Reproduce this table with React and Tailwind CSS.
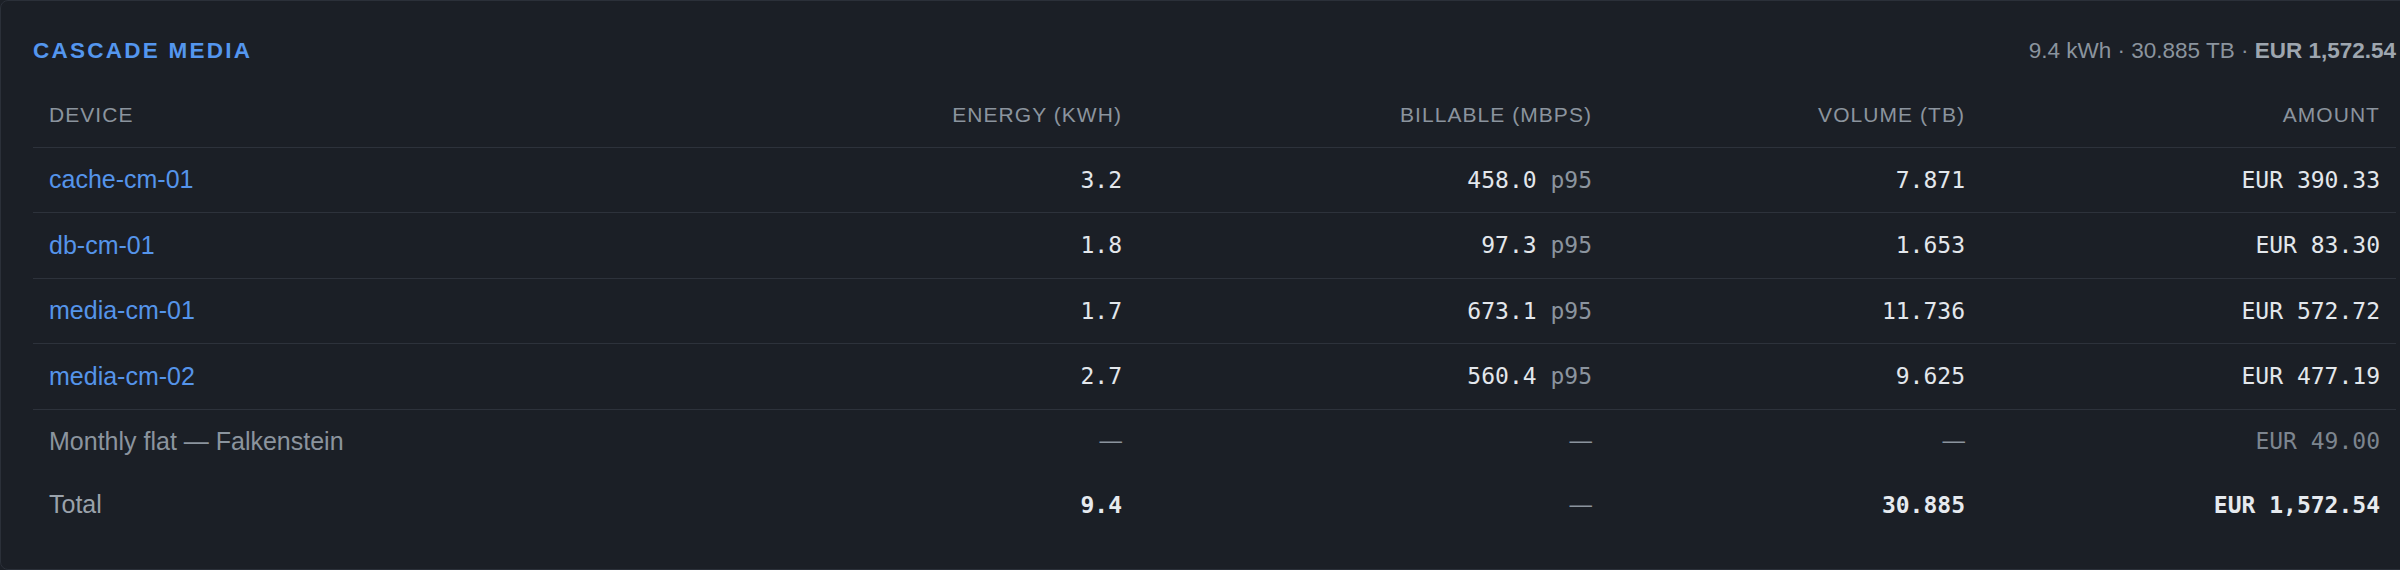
const rows = [
  { device: "cache-cm-01", energy: "3.2", mbps: "458.0", volume: "7.871", amount: "EUR 390.33" },
  { device: "db-cm-01", energy: "1.8", mbps: "97.3", volume: "1.653", amount: "EUR 83.30" },
  { device: "media-cm-01", energy: "1.7", mbps: "673.1", volume: "11.736", amount: "EUR 572.72" },
  { device: "media-cm-02", energy: "2.7", mbps: "560.4", volume: "9.625", amount: "EUR 477.19" },
];

const sans = "font-['Liberation_Sans',Arial,sans-serif]";
const mono = "font-['DejaVu_Sans_Mono',monospace]";

export default function App() {
  return (
    <div className="min-h-[570px] w-[2429px] bg-[#1c2027]">
      <section className={`w-[2429px] rounded-lg border border-[#2b3039] bg-[#1b1f26] p-8 ${sans}`}>
        {/* Customer header */}
        <div className="mb-[15px] flex h-[35px] items-center justify-between">
          <h2 className="text-[22.5px] font-bold uppercase tracking-[0.1em] text-[#5496ee]">
            Cascade Media
          </h2>
          <p className="text-[22.5px] text-[#8b949e]">
            9.4 kWh · 30.885 TB ·{" "}
            <span className="font-bold text-[#9ea6af]">EUR 1,572.54</span>
          </p>
        </div>

        <table className="w-full table-fixed border-collapse">
          <thead>
            <tr className="h-16 border-b border-[#2d323b] text-[21px] uppercase tracking-[0.05em] text-[#8b949e]">
              <th className="w-[700px] px-4 text-left font-normal">Device</th>
              <th className="w-[405px] px-4 text-right font-normal">Energy (kWh)</th>
              <th className="w-[470px] px-4 text-right font-normal">Billable (Mbps)</th>
              <th className="w-[373px] px-4 text-right font-normal">Volume (TB)</th>
              <th className="w-[415px] px-4 text-right font-normal">Amount</th>
            </tr>
          </thead>
          <tbody>
            {rows.map((r) => (
              <tr key={r.device} className="h-[65.5px] border-b border-[#2d323b]">
                <td className="px-4 text-[25px] text-[#5594ea]">{r.device}</td>
                <td className={`px-4 text-right text-[23px] text-[#e3e7ec] ${mono}`}>{r.energy}</td>
                <td className={`px-4 text-right text-[23px] text-[#e3e7ec] ${mono}`}>
                  {r.mbps} <span className="text-[#8b949e]">p95</span>
                </td>
                <td className={`px-4 text-right text-[23px] text-[#e3e7ec] ${mono}`}>{r.volume}</td>
                <td className={`px-4 text-right text-[23px] text-[#e3e7ec] ${mono}`}>{r.amount}</td>
              </tr>
            ))}
            <tr className="h-16">
              <td className="px-4 text-[25px] text-[#8b949e]">Monthly flat — Falkenstein</td>
              <td className="px-4 text-right text-[22.5px] text-[#8b949e]">—</td>
              <td className="px-4 text-right text-[22.5px] text-[#8b949e]">—</td>
              <td className="px-4 text-right text-[22.5px] text-[#8b949e]">—</td>
              <td className={`px-4 text-right text-[23px] text-[#7d858f] ${mono}`}>EUR 49.00</td>
            </tr>
            <tr className="h-16">
              <td className="px-4 text-[25px] text-[#9aa2ab]">Total</td>
              <td className={`px-4 text-right text-[23px] font-bold text-[#e6eaef] ${mono}`}>9.4</td>
              <td className="px-4 text-right text-[22.5px] text-[#8b949e]">—</td>
              <td className={`px-4 text-right text-[23px] font-bold text-[#e6eaef] ${mono}`}>30.885</td>
              <td className={`px-4 text-right text-[23px] font-bold text-[#e6eaef] ${mono}`}>EUR 1,572.54</td>
            </tr>
          </tbody>
        </table>
      </section>
    </div>
  );
}
